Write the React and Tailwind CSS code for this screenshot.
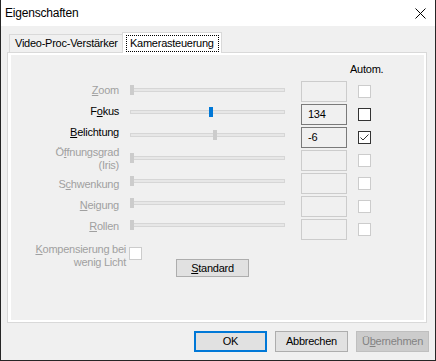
import React from "react";

const DIS = "text-[#a0a0a0]";

function U({ children }) {
  return <span className="underline underline-offset-[1px] decoration-1">{children}</span>;
}

function Slider({ pos, thumb, mt }) {
  return (
    <div className="relative ml-[11px] w-[155px] h-[10px] flex items-center" style={{ marginTop: mt }}>
      <div className="w-full h-[4px] border border-[#d6d6d6] bg-[#e7e7e7]" />
      <div className={`absolute top-0 w-[4px] h-[10px] ${thumb}`} style={{ left: pos }} />
    </div>
  );
}

function Check({ enabled, checked }) {
  return (
    <div
      className={`ml-[11px] mt-[5px] w-[13px] h-[13px] border bg-white flex items-center justify-center ${
        enabled ? "border-[#333333]" : "border-[#cccccc]"
      }`}
    >
      {checked && (
        <svg width="11" height="11" viewBox="0 0 11 11">
          <polyline points="1.5,5.5 4,8 9.5,2.5" fill="none" stroke="#333" strokeWidth="1" />
        </svg>
      )}
    </div>
  );
}

function Row({ label, labelMt, enabled, sliderMt, pos, thumb, value, autoEnabled, checked }) {
  return (
    <div className="flex items-start h-[23px]">
      <div
        className={`w-[108px] text-right leading-[13px] ${enabled ? "text-black" : DIS}`}
        style={{ marginTop: labelMt }}
      >
        {label}
      </div>
      <Slider pos={pos} thumb={thumb} mt={sliderMt} />
      <div
        className={`ml-[16px] mt-px w-[46px] h-[21px] border pl-[6px] leading-[19px] text-black ${
          value !== "" ? "border-[#7a7a7a]" : "border-[#cccccc]"
        }`}
      >
        {value}
      </div>
      <Check enabled={autoEnabled} checked={checked} />
    </div>
  );
}

function Btn({ children, cls }) {
  return (
    <div className={`w-[73px] h-[21px] flex items-center justify-center ${cls}`}>{children}</div>
  );
}

export default function App() {
  const gray = "bg-[#cccccc]";
  const rows = [
    { label: <><U>Z</U>oom</>, labelMt: 4, enabled: false, sliderMt: 5, pos: 0, thumb: gray, value: "", autoEnabled: false, checked: false },
    { label: <>F<U>o</U>kus</>, labelMt: 2, enabled: true, sliderMt: 4, pos: 79, thumb: "bg-[#0078d7]", value: "134", autoEnabled: true, checked: false },
    { label: <><U>B</U>elichtung</>, labelMt: 0, enabled: true, sliderMt: 4, pos: 83, thumb: gray, value: "-6", autoEnabled: true, checked: true },
    { label: <>Ö<U>f</U>fnungsgrad<br />(Iris)</>, labelMt: -3, enabled: false, sliderMt: 4, pos: 0, thumb: gray, value: "", autoEnabled: false, checked: false },
    { label: <>S<U>c</U>hwenkung</>, labelMt: 6, enabled: false, sliderMt: 4, pos: 0, thumb: gray, value: "", autoEnabled: false, checked: false },
    { label: <><U>N</U>eigung</>, labelMt: 4, enabled: false, sliderMt: 3, pos: 0, thumb: gray, value: "", autoEnabled: false, checked: false },
    { label: <><U>R</U>ollen</>, labelMt: 2, enabled: false, sliderMt: 2, pos: 0, thumb: gray, value: "", autoEnabled: false, checked: false },
  ];

  return (
    <div className="w-[436px] h-[361px] flex flex-col bg-[#f0f0f0] border-l border-r border-b border-[#262626] font-['Liberation_Sans',Arial,sans-serif] text-[11px] tracking-[-0.25px] text-black overflow-hidden">
      {/* title bar */}
      <div className="h-[26px] shrink-0 bg-white flex items-center justify-between pl-[4px] pr-[9px]">
        <span className="text-[12px] tracking-[-0.2px] leading-[26px]">Eigenschaften</span>
        <svg width="11" height="11" viewBox="0 0 11 11" className="mt-px">
          <line x1="0.5" y1="0.5" x2="10.5" y2="10.5" stroke="#000" strokeWidth="1" />
          <line x1="10.5" y1="0.5" x2="0.5" y2="10.5" stroke="#000" strokeWidth="1" />
        </svg>
      </div>

      {/* body */}
      <div className="flex-1 flex flex-col pl-[6px] pt-[6px]">
        {/* tabs */}
        <div className="flex items-end h-[20px] ml-[2px]">
          <div className="w-[114px] h-[18px] border-l border-t border-r border-[#d9d9d9] bg-[#f0f0f0] pl-[5px] leading-[17px] whitespace-nowrap">
            Video-Proc-Verstärker
          </div>
          <div className="relative z-10 -ml-px -mb-px w-[100px] h-[21px] border-l border-t border-r border-[#d9d9d9] bg-white">
            <div className="mt-[2px] ml-[3px] w-[93px] h-[17px] border border-dotted border-black pl-[3px] leading-[15px] whitespace-nowrap">
              Kamerasteuerung
            </div>
          </div>
        </div>

        {/* panel */}
        <div className="w-[420px] h-[271px] border border-[#d9d9d9] bg-white pt-[2px] pl-[3px] pr-[2px] pb-[2px]">
          <div className="w-full h-full bg-[#f0f0f0] flex flex-col">
            <div className="h-[25px] pt-[8px] pl-[339px] leading-[13px]">Autom.</div>
            {rows.map((r, i) => (
              <Row key={i} {...r} />
            ))}
            <div className="flex items-start">
              <div className={`w-[115px] text-right leading-[13px] mt-[2px] ${DIS}`}>
                <U>K</U>ompensierung bei
                <br />
                wenig Licht
              </div>
              <div className="ml-[3px] mt-[6px] w-[13px] h-[13px] border border-[#cccccc] bg-white" />
              <div className="ml-[34px] mt-[18px] w-[73px] h-[18px] border border-[#adadad] bg-[#e1e1e1] flex items-center justify-center">
                <span>
                  <U>S</U>tandard
                </span>
              </div>
            </div>
          </div>
        </div>

        {/* buttons */}
        <div className="flex justify-end gap-[8px] mt-[8px] pr-[6px]">
          <Btn cls="border-2 border-[#0078d7] bg-[#e1e1e1]">OK</Btn>
          <Btn cls="border border-[#adadad] bg-[#e1e1e1]">Abbrechen</Btn>
          <Btn cls="border border-[#bfbfbf] bg-[#cccccc] text-[#838383]">
            <span>
              Ü<U>b</U>ernehmen
            </span>
          </Btn>
        </div>
      </div>
    </div>
  );
}
